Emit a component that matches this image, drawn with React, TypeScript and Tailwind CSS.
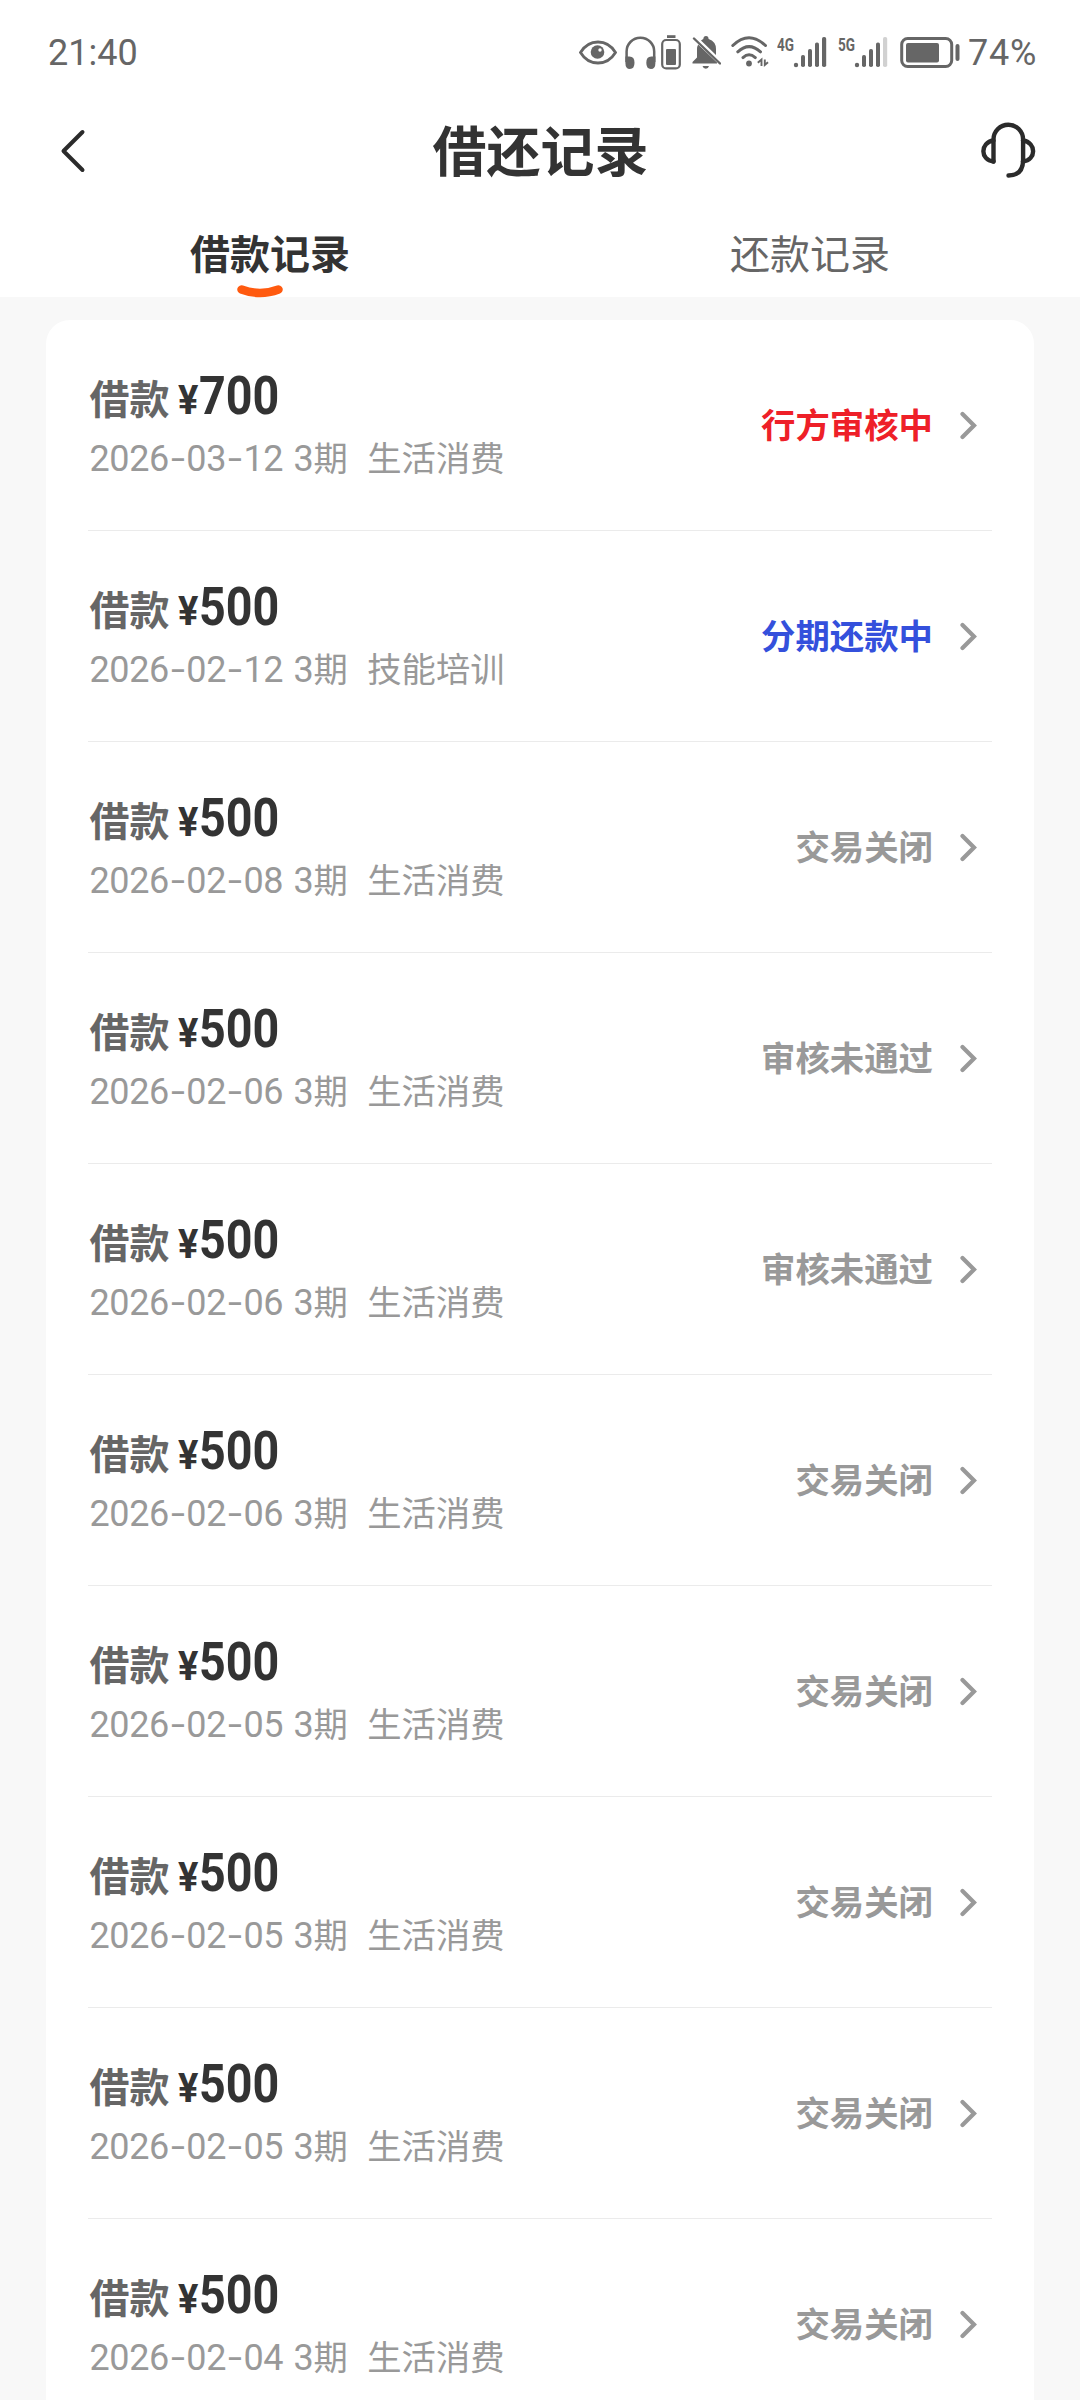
interface LoanRecord {
  id: number;
  amount: number;
  date: string;
  periods: number;
  purpose: string;
  status: keyof typeof STATUS_CONFIG;
}

const STATUS_CONFIG = {
  reviewing: { label: '行方审核中', text: 'text-[#ee2028]' },
  repaying: { label: '分期还款中', text: 'text-[#3450dc]' },
  closed: { label: '交易关闭', text: 'text-[#999999]' },
  rejected: { label: '审核未通过', text: 'text-[#999999]' },
};

const RECORDS: LoanRecord[] = [
  { id: 1, amount: 700, date: '2026-03-12', periods: 3, purpose: '生活消费', status: 'reviewing' },
  { id: 2, amount: 500, date: '2026-02-12', periods: 3, purpose: '技能培训', status: 'repaying' },
  { id: 3, amount: 500, date: '2026-02-08', periods: 3, purpose: '生活消费', status: 'closed' },
  { id: 4, amount: 500, date: '2026-02-06', periods: 3, purpose: '生活消费', status: 'rejected' },
  { id: 5, amount: 500, date: '2026-02-06', periods: 3, purpose: '生活消费', status: 'rejected' },
  { id: 6, amount: 500, date: '2026-02-06', periods: 3, purpose: '生活消费', status: 'closed' },
  { id: 7, amount: 500, date: '2026-02-05', periods: 3, purpose: '生活消费', status: 'closed' },
  { id: 8, amount: 500, date: '2026-02-05', periods: 3, purpose: '生活消费', status: 'closed' },
  { id: 9, amount: 500, date: '2026-02-05', periods: 3, purpose: '生活消费', status: 'closed' },
  { id: 10, amount: 500, date: '2026-02-04', periods: 3, purpose: '生活消费', status: 'closed' },
];

function Signal({ label, weak }: { label: string; weak?: boolean }) {
  return (
    <svg className="h-10 w-[50px]" viewBox="0 0 50 40" fill="currentColor">
      <text x="0" y="18.5" fontSize="19" fontWeight="700" textLength="17" lengthAdjust="spacingAndGlyphs">
        {label}
      </text>
      <circle cx="19" cy="33" r="2.2" />
      <rect x="24" y="23" width="4" height="12" rx="1.8" />
      <rect x="31" y="17" width="4" height="18" rx="1.8" />
      <rect x="38" y="10.5" width="4" height="24.5" rx="1.8" />
      <rect x="45" y="5" width="4.2" height="30" rx="1.8" opacity={weak ? 0.3 : 1} />
    </svg>
  );
}

function StatusBar() {
  return (
    <div className="flex h-[104px] items-center justify-between pl-[48px] pr-[43px] text-[#666666]">
      <span className="pt-px text-[36px] leading-10">21:40</span>
      <div className="flex items-center">
        {/* Eye comfort */}
        <svg className="mr-[8px] h-10 w-[38px]" viewBox="0 0 38 40" fill="none" stroke="currentColor" strokeWidth="2.8">
          <path d="M1.5 20.5C10 6.5 28 6.5 36.5 20.5C28 34.5 10 34.5 1.5 20.5Z" />
          <circle cx="18.5" cy="20" r="6.8" fill="currentColor" stroke="none" />
          <circle cx="21" cy="18" r="1.7" fill="white" stroke="none" />
        </svg>
        {/* Headphones */}
        <svg className="mr-[5px] h-10 w-[31px]" viewBox="0 0 31 40" fill="none" stroke="currentColor" strokeWidth="2.5">
          <path d="M1.6 30V19.5a13.8 13.8 0 0 1 27.6 0V30" />
          <path d="M0.4 24.5H4.5q5 0 5 6.2t-4.6 6.3q-4.5 0-4.5-6zM30.4 24.5H26.3q-5 0-5 6.2t4.6 6.3q4.5 0 4.5-6z" fill="currentColor" stroke="none" />
        </svg>
        {/* Accessory battery */}
        <svg className="mr-[11px] h-10 w-[20px]" viewBox="0 0 20 40" fill="none" stroke="currentColor" strokeWidth="2.2">
          <rect x="1.2" y="8" width="17.6" height="28.4" rx="4" />
          <rect x="5" y="17" width="10" height="16" rx="1" fill="currentColor" stroke="none" />
          <path d="M6 4.6h8.5" strokeWidth="2.8" />
        </svg>
        {/* Muted */}
        <svg className="mr-[10px] h-10 w-[29px]" viewBox="0 0 29 40" fill="currentColor">
          <path d="M5 17Q5 14.5 6.2 12.5L25 30.5V31.5H0.5V30L5 25.5ZM9 8.5Q10 7.5 11.3 7Q11.5 4 14 4T16.6 7Q24 9.5 24 17V23Z" />
          <path d="M10.5 34h6.5q-.8 2.8-3.2 2.8T10.5 34Z" />
          <path d="M2 6.5 28 31.5" stroke="currentColor" strokeWidth="2.4" strokeLinecap="round" />
        </svg>
        {/* Wi-Fi */}
        <svg className="mr-[8px] h-10 w-[38px]" viewBox="0 0 38 40" fill="none" stroke="currentColor" strokeWidth="3" strokeLinecap="round">
          <path d="M1.8 13.5Q18 -2 34.5 13.5M6.8 19.8Q18 9.5 29.5 19.8M12 25.6Q18 20 24.3 25.6" />
          <circle cx="18" cy="31.5" r="2.9" fill="currentColor" stroke="none" />
          <path d="M30.5 34V27.5L26.8 30.8M33.8 27.5V33L37 30.2" strokeWidth="1.9" strokeLinecap="butt" />
        </svg>
        <div className="mr-[11px]">
          <Signal label="4G" />
        </div>
        <div className="mr-[12px]">
          <Signal label="5G" weak />
        </div>
        {/* Phone battery */}
        <svg className="mr-[8px] h-10 w-[60px]" viewBox="0 0 60 40" fill="none" stroke="currentColor" strokeWidth="3">
          <rect x="1.7" y="6.5" width="50" height="28" rx="6" />
          <rect x="6" y="11" width="33" height="19.5" rx="2" fill="currentColor" stroke="none" />
          <rect x="55.5" y="12" width="4" height="17" rx="2" fill="currentColor" stroke="none" />
        </svg>
        <span className="pt-px text-[36px] leading-10 tracking-[0.7px]">74%</span>
      </div>
    </div>
  );
}

function Header() {
  return (
    <div className="flex h-[94px] items-center justify-between pl-[60px] pr-[43px] text-[#2b2b2b]">
      <svg className="h-11 w-[62px]" viewBox="0 0 62 44" fill="none" stroke="currentColor" strokeWidth="4" strokeLinecap="round" strokeLinejoin="round">
        <path d="M22.5 3 3.5 22 22.5 41" />
      </svg>
      <h1 className="pt-[5px] text-[54px] font-bold leading-[80px] text-[#333333]">借还记录</h1>
      <svg className="mb-[3px] ml-5 h-[56px] w-[58px]" viewBox="0 0 58 56" fill="none" stroke="currentColor" strokeWidth="4.4" strokeLinecap="round" strokeLinejoin="round">
        <path d="M14.5 39.5V17.5a14.8 14.8 0 0 1 29.6 0V38Q44 53.5 29.5 53.5" />
        <path d="M14.5 18.5C1 20.5 1 38 14.5 39.5M44 18.5C57.5 20.5 57.5 38 44 39.5" />
      </svg>
    </div>
  );
}

function Tabs() {
  return (
    <div className="grid h-[99px] grid-cols-2 text-center text-[40px] leading-[60px]">
      <div className="pt-[28px] font-bold text-[#333333]">
        借款记录
        <svg className="-mt-px ml-[236px] h-[13px] w-[48px]" viewBox="0 0 48 13" fill="none" stroke="#ff5a0f" strokeWidth="8.5" strokeLinecap="round">
          <path d="M5.5 4.5Q24 11.5 42.5 4.5" />
        </svg>
      </div>
      <div className="pt-[28px] text-[#666666]">还款记录</div>
    </div>
  );
}

function RecordRow({ record }: { record: LoanRecord }) {
  const cfg = STATUS_CONFIG[record.status];

  return (
    <div className="flex h-[211px] shrink-0 items-center justify-between border-b border-[#ebebeb] pr-[14px]">
      <div className="pl-[1.5px] pt-px">
        <div className="flex h-[60px] items-baseline font-bold text-[#333333]">
          <span className="text-[40px] leading-[60px] text-[#666666]">借款</span>
          <span className="ml-[8px] w-[21px] text-[40px] leading-[60px]">
            <span className="inline-block origin-left scale-x-[0.95]">¥</span>
          </span>
          <span className="inline-block origin-left scale-x-[0.88] text-[53px] leading-[60px]">{record.amount}</span>
        </div>
        <div className="flex h-[60px] items-baseline pt-[3px] text-[36px] leading-[60px] text-[#999999]">
          <span className="flex w-[196px] tracking-[-0.4px]">
            {record.date.split('-').map((part, i) => (
              <span key={i} className="flex">
                {i > 0 && <span className="w-[17.5px] origin-center scale-x-[1.4] text-center">-</span>}
                {part}
              </span>
            ))}
          </span>
          <span className="ml-[8px] w-[20px]">{record.periods}</span>
          <span className="text-[34.3px]">期</span>
          <span className="ml-[19.5px] text-[34.3px]">{record.purpose}</span>
        </div>
      </div>
      <div className="flex items-center">
        <span className={`pt-[2px] text-[34.4px] font-bold leading-[52px] ${cfg.text}`}>{cfg.label}</span>
        <svg className="ml-[27px] h-[30px] w-[18px]" viewBox="0 0 18 30" fill="none" stroke="#999999" strokeWidth="4.2" strokeLinecap="round">
          <path d="M2.5 4 14 15.5 2.5 27" />
        </svg>
      </div>
    </div>
  );
}

export default function App() {
  return (
    <div className="flex h-[2400px] w-[1080px] flex-col overflow-hidden bg-[#f8f8f8] font-['Roboto','Noto_Sans_CJK_SC',sans-serif]">
      <div className="shrink-0 bg-white">
        <StatusBar />
        <Header />
        <Tabs />
      </div>
      <div className="mx-[46px] mt-[23px] flex min-h-0 flex-1 flex-col overflow-hidden rounded-t-3xl bg-white px-[42px]">
        {RECORDS.map((record) => (
          <RecordRow key={record.id} record={record} />
        ))}
      </div>
    </div>
  );
}
